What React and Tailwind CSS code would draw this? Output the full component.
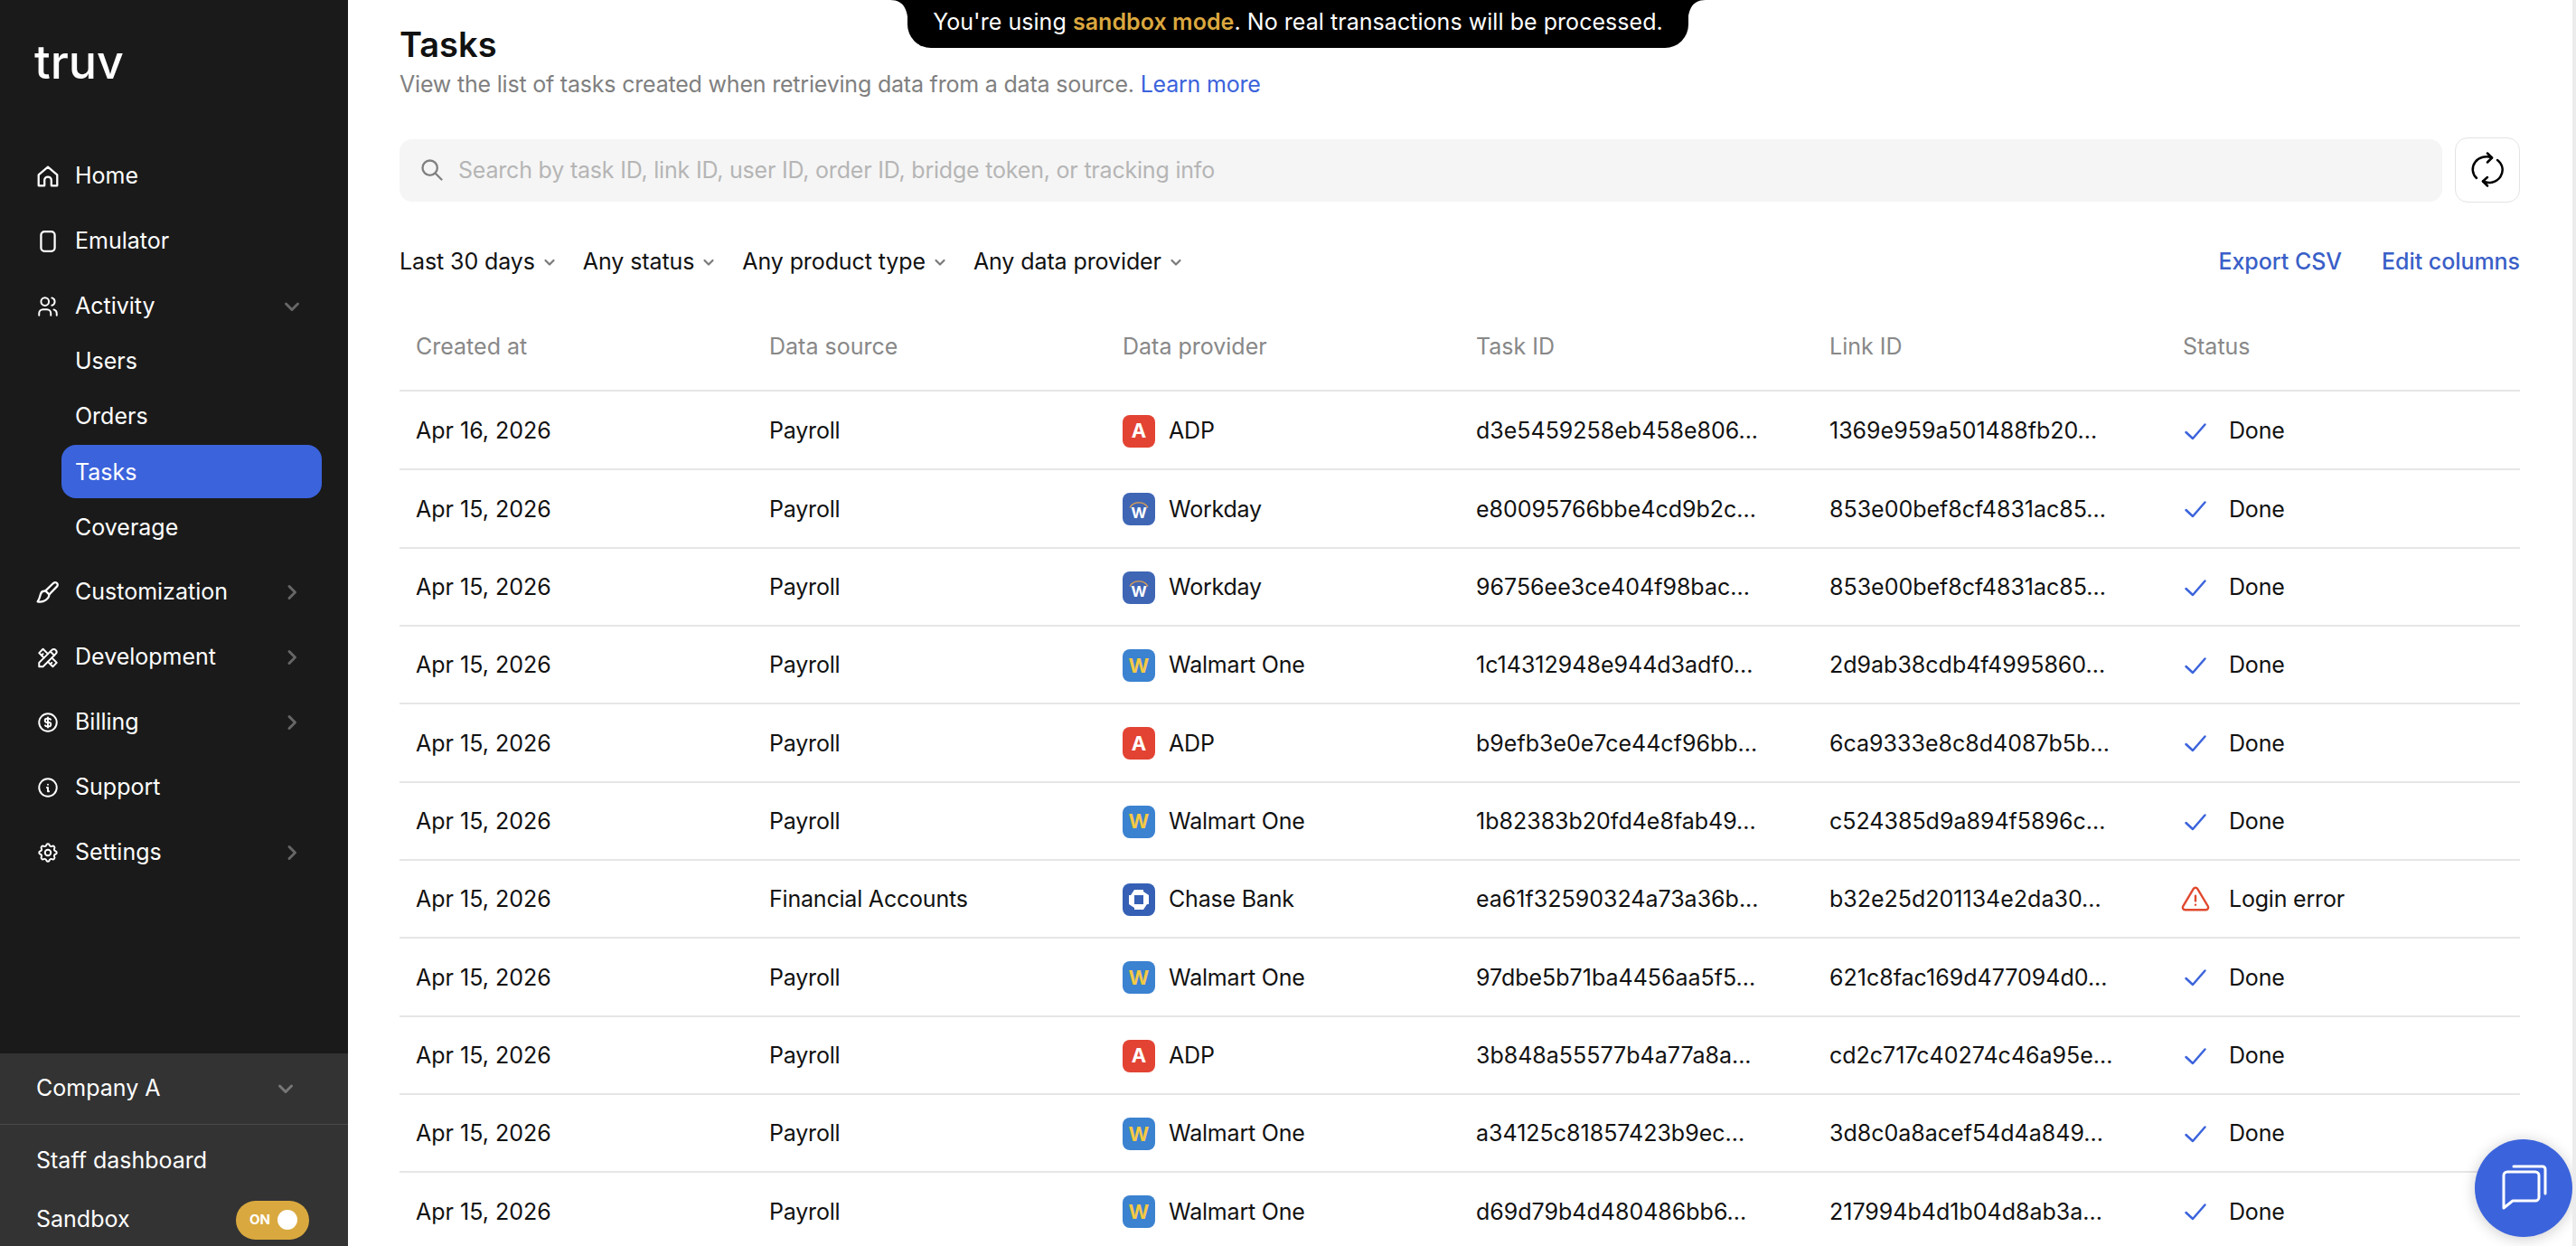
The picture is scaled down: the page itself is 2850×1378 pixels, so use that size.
import React from "react";
import { TbUsers, TbTools, TbCoin, TbInfoCircle, TbSettings, TbAlertTriangle, TbSearch } from "react-icons/tb";

const HomeIcon = () => (
  <svg width="26" height="26" viewBox="0 0 24 24" fill="none" stroke="currentColor" strokeWidth="2.100" strokeLinejoin="round" strokeLinecap="round">
    <path d="M2.500 10.500 12 2.500l9.500 8V21.500h-6v-5.500a3.500 3.500 0 0 0-7 0v5.500h-6z" />
  </svg>
);
const PhoneIcon = () => (
  <svg width="26" height="26" viewBox="0 0 24 24" fill="none" stroke="currentColor" strokeWidth="2.100">
    <rect x="5" y="2" width="14" height="20" rx="3.500" />
  </svg>
);
const BrushIcon = () => (
  <svg width="26" height="26" viewBox="0 0 24 24" fill="none" stroke="currentColor" strokeWidth="2.100" strokeLinejoin="round" strokeLinecap="round">
    <path d="M21 2.500c-1-.8-2.500-.6-3.500.3L9.500 10.500l3.800 3.800 7.900-8.200c1-1 1-2.800-.2-3.600z" />
    <path d="M9.200 10.800c-2.400-.2-4.200 1.200-4.700 3.200-.4 1.700-1.200 5-3 7.500 2.800.6 6.300-.2 8.300-1.600 2.400-1.800 3.600-3.600 3.400-5.500" />
  </svg>
);
const Chevron = ({ dir = "right", className = "" }) => (
  <svg width="20" height="20" viewBox="0 0 20 20" fill="none" stroke="currentColor" strokeWidth="3" strokeLinecap="round" strokeLinejoin="round" className={className}>
    {dir === "right" ? <path d="M7 3.500 13.500 10 7 16.500" /> : <path d="M3.500 7 10 13.500 16.500 7" />}
  </svg>
);
const Caret = () => (
  <svg width="14" height="14" viewBox="0 0 14 14" fill="none" stroke="#7a7a7a" strokeWidth="2.200" strokeLinecap="round" strokeLinejoin="round">
    <path d="M2.500 5 7 9.500 11.500 5" />
  </svg>
);
const Check = () => (
  <svg width="26" height="26" viewBox="0 0 26 26" fill="none" stroke="#3b63dc" strokeWidth="2.500" strokeLinecap="round" strokeLinejoin="round">
    <path d="M2.500 14 10 21 23.500 5.500" />
  </svg>
);
const Refresh = () => (
  <svg width="36" height="40" viewBox="0 0 36 40" fill="none" stroke="#000" strokeWidth="2.500" strokeLinecap="round" strokeLinejoin="round">
    <path d="M23 6.500A15 14 0 0 0 6 29" />
    <path d="M13 32.500A15 14 0 0 0 29 9" />
    <path d="M18 1.500 23 6.500 18 11.500" />
    <path d="M18 28 13 32.500 18 37.500" />
  </svg>
);

const Adp = () => <div className="w-9 h-9 rounded-lg bg-[#e24333] flex items-center justify-center text-white font-bold text-[22px]">A</div>;
const Workday = () => (
  <div className="relative w-9 h-9 rounded-lg bg-[#3f66b5] flex items-end justify-center text-white font-semibold text-[21px] leading-[30px]">
    w
    <svg width="22" height="10" viewBox="0 0 22 10" fill="none" stroke="#e0a050" strokeWidth="1.400" className="absolute left-[7px] top-[8px]">
      <path d="M1 8.500C5 1 17 1 21 8.500" />
    </svg>
  </div>
);
const Walmart = () => <div className="w-9 h-9 rounded-lg bg-[#3b82d0] flex items-center justify-center text-[#f5c945] font-bold text-[22px]">W</div>;
const Chase = () => (
  <div className="w-9 h-9 rounded-lg bg-[#3560b5] flex items-center justify-center">
    <svg width="24" height="24" viewBox="0 0 24 24" fill="#fff">
      <path d="M7 1H17V7H3Z M23 7V17H17V3Z M17 23H7V17H21Z M1 17V7H7V21Z" />
    </svg>
  </div>
);
const logos = { ADP: Adp, Workday, "Walmart One": Walmart, "Chase Bank": Chase };

const rows = [
  ["Apr 16, 2026", "Payroll", "ADP", "d3e5459258eb458e806...", "1369e959a501488fb20...", "Done"],
  ["Apr 15, 2026", "Payroll", "Workday", "e80095766bbe4cd9b2c...", "853e00bef8cf4831ac85...", "Done"],
  ["Apr 15, 2026", "Payroll", "Workday", "96756ee3ce404f98bac...", "853e00bef8cf4831ac85...", "Done"],
  ["Apr 15, 2026", "Payroll", "Walmart One", "1c14312948e944d3adf0...", "2d9ab38cdb4f4995860...", "Done"],
  ["Apr 15, 2026", "Payroll", "ADP", "b9efb3e0e7ce44cf96bb...", "6ca9333e8c8d4087b5b...", "Done"],
  ["Apr 15, 2026", "Payroll", "Walmart One", "1b82383b20fd4e8fab49...", "c524385d9a894f5896c...", "Done"],
  ["Apr 15, 2026", "Financial Accounts", "Chase Bank", "ea61f32590324a73a36b...", "b32e25d201134e2da30...", "Login error"],
  ["Apr 15, 2026", "Payroll", "Walmart One", "97dbe5b71ba4456aa5f5...", "621c8fac169d477094d0...", "Done"],
  ["Apr 15, 2026", "Payroll", "ADP", "3b848a55577b4a77a8a...", "cd2c717c40274c46a95e...", "Done"],
  ["Apr 15, 2026", "Payroll", "Walmart One", "a34125c81857423b9ec...", "3d8c0a8acef54d4a849...", "Done"],
  ["Apr 15, 2026", "Payroll", "Walmart One", "d69d79b4d480486bb6...", "217994b4d1b04d8ab3a...", "Done"],
];

const NavItem = ({ icon, label, chevron }) => (
  <div className="h-[72px] flex items-center text-white pt-[2px]">
    <div className="w-[26px] h-[26px] ml-[40px] mr-[17px] flex items-center justify-center">{icon}</div>
    <span className="flex-1">{label}</span>
    {chevron && <Chevron dir={chevron} className="mr-[52px] text-[#666666]" />}
  </div>
);
const SubItem = ({ label, active }) => (
  <div className={`h-[59px] w-[288px] ml-[68px] rounded-2xl flex items-center pl-[15px] pt-[2px] text-white ${active ? "bg-[#3b63dc]" : ""}`}>
    {label}
  </div>
);

const Filter = ({ label }) => (
  <div className="flex items-center gap-[9px] text-[#111111] tracking-[-0.1px]">
    <span>{label}</span>
    <Caret />
  </div>
);

export default function App() {
  return (
    <div className="h-screen w-full flex overflow-hidden bg-white text-[25px] font-['Inter','Liberation_Sans',sans-serif]">
      <aside className="w-[385px] shrink-0 h-full bg-[#1a1a1a] flex flex-col">
        <div className="pl-[38px] pt-[35px] h-[158px] text-white text-[52px] font-medium leading-[68px]">truv</div>
        <nav className="flex flex-col flex-1">
          <NavItem icon={<HomeIcon />} label="Home" />
          <NavItem icon={<PhoneIcon />} label="Emulator" />
          <NavItem icon={<TbUsers size={28} strokeWidth={1.8} />} label="Activity" chevron="down" />
          <div className="-mt-[5px] mb-[6px] flex flex-col gap-[2.4px]">
            <SubItem label="Users" />
            <SubItem label="Orders" />
            <SubItem label="Tasks" active />
            <SubItem label="Coverage" />
          </div>
          <NavItem icon={<BrushIcon />} label="Customization" chevron="right" />
          <NavItem icon={<TbTools size={31} strokeWidth={1.8} />} label="Development" chevron="right" />
          <NavItem icon={<TbCoin size={32} strokeWidth={1.8} />} label="Billing" chevron="right" />
          <NavItem icon={<TbInfoCircle size={32} strokeWidth={1.8} />} label="Support" />
          <NavItem icon={<TbSettings size={30} strokeWidth={1.8} />} label="Settings" chevron="right" />
        </nav>
        <div className="bg-[#333333] h-[213px] shrink-0 text-white">
          <div className="h-[79px] border-b border-[#4a4a4a] flex items-center justify-between pl-[40px] pr-[59px]">
            <span>Company A</span>
            <Chevron dir="down" className="text-[#777777]" />
          </div>
          <div className="h-[80px] flex items-center pl-[40px]">Staff dashboard</div>
          <div className="h-[50px] flex items-center justify-between pl-[40px] pr-[43px]">
            <span>Sandbox</span>
            <div className="w-[81px] h-[43px] rounded-full bg-[#d9a93f] flex items-center justify-between pl-[15px] pr-[13px]">
              <span className="text-[15px] font-bold">ON</span>
              <span className="w-[22px] h-[22px] rounded-full bg-white" />
            </div>
          </div>
        </div>
      </aside>

      <main className="relative flex-1 h-full overflow-hidden pl-[57px] pr-[58px] border-r-[4px] border-[#ececec]">
        <h1 className="pt-[26px] text-[38px] leading-[46px] font-semibold text-[#111111]">Tasks</h1>
        <p className="mt-[2px] leading-[38px] text-[#808080] tracking-[-0.2px]">
          View the list of tasks created when retrieving data from a data source. <span className="text-[#3b63dc]">Learn more</span>
        </p>
        <div className="mt-[40px] flex items-center gap-[14px]">
          <div className="flex-1 h-[69px] rounded-[14px] bg-[#f5f5f5] flex items-center pl-[22px]">
            <TbSearch size={28} className="text-[#808080] mr-[15px]" />
            <input className="flex-1 bg-transparent outline-none pt-[2px] tracking-[-0.2px] placeholder:text-[#b5b5b5]" placeholder="Search by task ID, link ID, user ID, order ID, bridge token, or tracking info" />
          </div>
          <button className="w-[72px] h-[72px] rounded-[14px] border border-[#e3e3e3] flex items-center justify-center">
            <Refresh />
          </button>
        </div>
        <div className="mt-[48px] h-[36px] flex items-center justify-between">
          <div className="flex items-center gap-[30px]">
            <Filter label="Last 30 days" />
            <Filter label="Any status" />
            <Filter label="Any product type" />
            <Filter label="Any data provider" />
          </div>
          <div className="flex items-center gap-[44px] text-[#3a5fc8] font-medium tracking-[-0.05px]">
            <span>Export CSV</span>
            <span>Edit columns</span>
          </div>
        </div>
        <div className="mt-[28px] grid grid-cols-6 h-[97px] items-center border-b-2 border-[#e6e6e6] text-[#888888]">
          {["Created at", "Data source", "Data provider", "Task ID", "Link ID", "Status"].map((h) => (
            <div key={h} className="pl-[18px]">{h}</div>
          ))}
        </div>
        {rows.map((r, i) => {
          const Logo = logos[r[2]];
          return (
            <div key={i} className={`grid grid-cols-6 items-center border-b-2 border-[#e6e6e6] text-[#111111] pt-[2px] ${i === 0 ? "h-[87.33px]" : "h-[86.33px]"}`}>
              <div className="pl-[18px]">{r[0]}</div>
              <div className="pl-[18px] tracking-[-0.2px]">{r[1]}</div>
              <div className="pl-[18px] flex items-center gap-[15px]"><Logo /><span className="tracking-[-0.2px]">{r[2]}</span></div>
              <div className="pl-[18px]">{r[3]}</div>
              <div className="pl-[18px]">{r[4]}</div>
              <div className="pl-[18px] flex items-center">
                <div className="w-[28px] flex justify-center mr-[23px]">
                  {r[5] === "Done" ? <Check /> : <TbAlertTriangle size={34} strokeWidth={1.7} className="shrink-0 text-[#e0492f]" />}
                </div>
                <span className="tracking-[-0.2px]">{r[5]}</span>
              </div>
            </div>
          );
        })}

        <div className="absolute top-0 left-[619px] w-[864px] h-[53px] bg-black rounded-b-[26px] flex items-center justify-center text-white pb-[3px] tracking-[0.05px]">
          <span>You're using <span className="text-[#dba83f] font-semibold">sandbox mode</span>. No real transactions will be processed.</span>
          <svg width="20" height="32" viewBox="0 0 20 32" fill="#000" className="absolute top-0 -left-[19px]">
            <path d="M0 0H20V32C20 12 16 0 0 0Z" />
          </svg>
          <svg width="20" height="32" viewBox="0 0 20 32" fill="#000" className="absolute top-0 -right-[19px]">
            <path d="M20 0H0V32C0 12 4 0 20 0Z" />
          </svg>
        </div>

        <div className="absolute right-0 top-[1260px] w-[108px] h-[108px] rounded-full bg-[#3b63dc] shadow-[0_2px_16px_rgba(0,0,0,0.2)] flex items-center justify-center">
          <svg width="50" height="50" viewBox="0 0 50 50" fill="none" stroke="#fff" strokeWidth="3" strokeLinejoin="round" strokeLinecap="round" className="-mt-[3px] ml-[2px]">
            <path d="M2 12a4 4 0 0 1 4-4h31a4 4 0 0 1 4 4v24a4 4 0 0 1-4 4H12L2 48z" />
            <path d="M13 2h32a3 3 0 0 1 3 3v27" />
          </svg>
        </div>
      </main>
    </div>
  );
}
